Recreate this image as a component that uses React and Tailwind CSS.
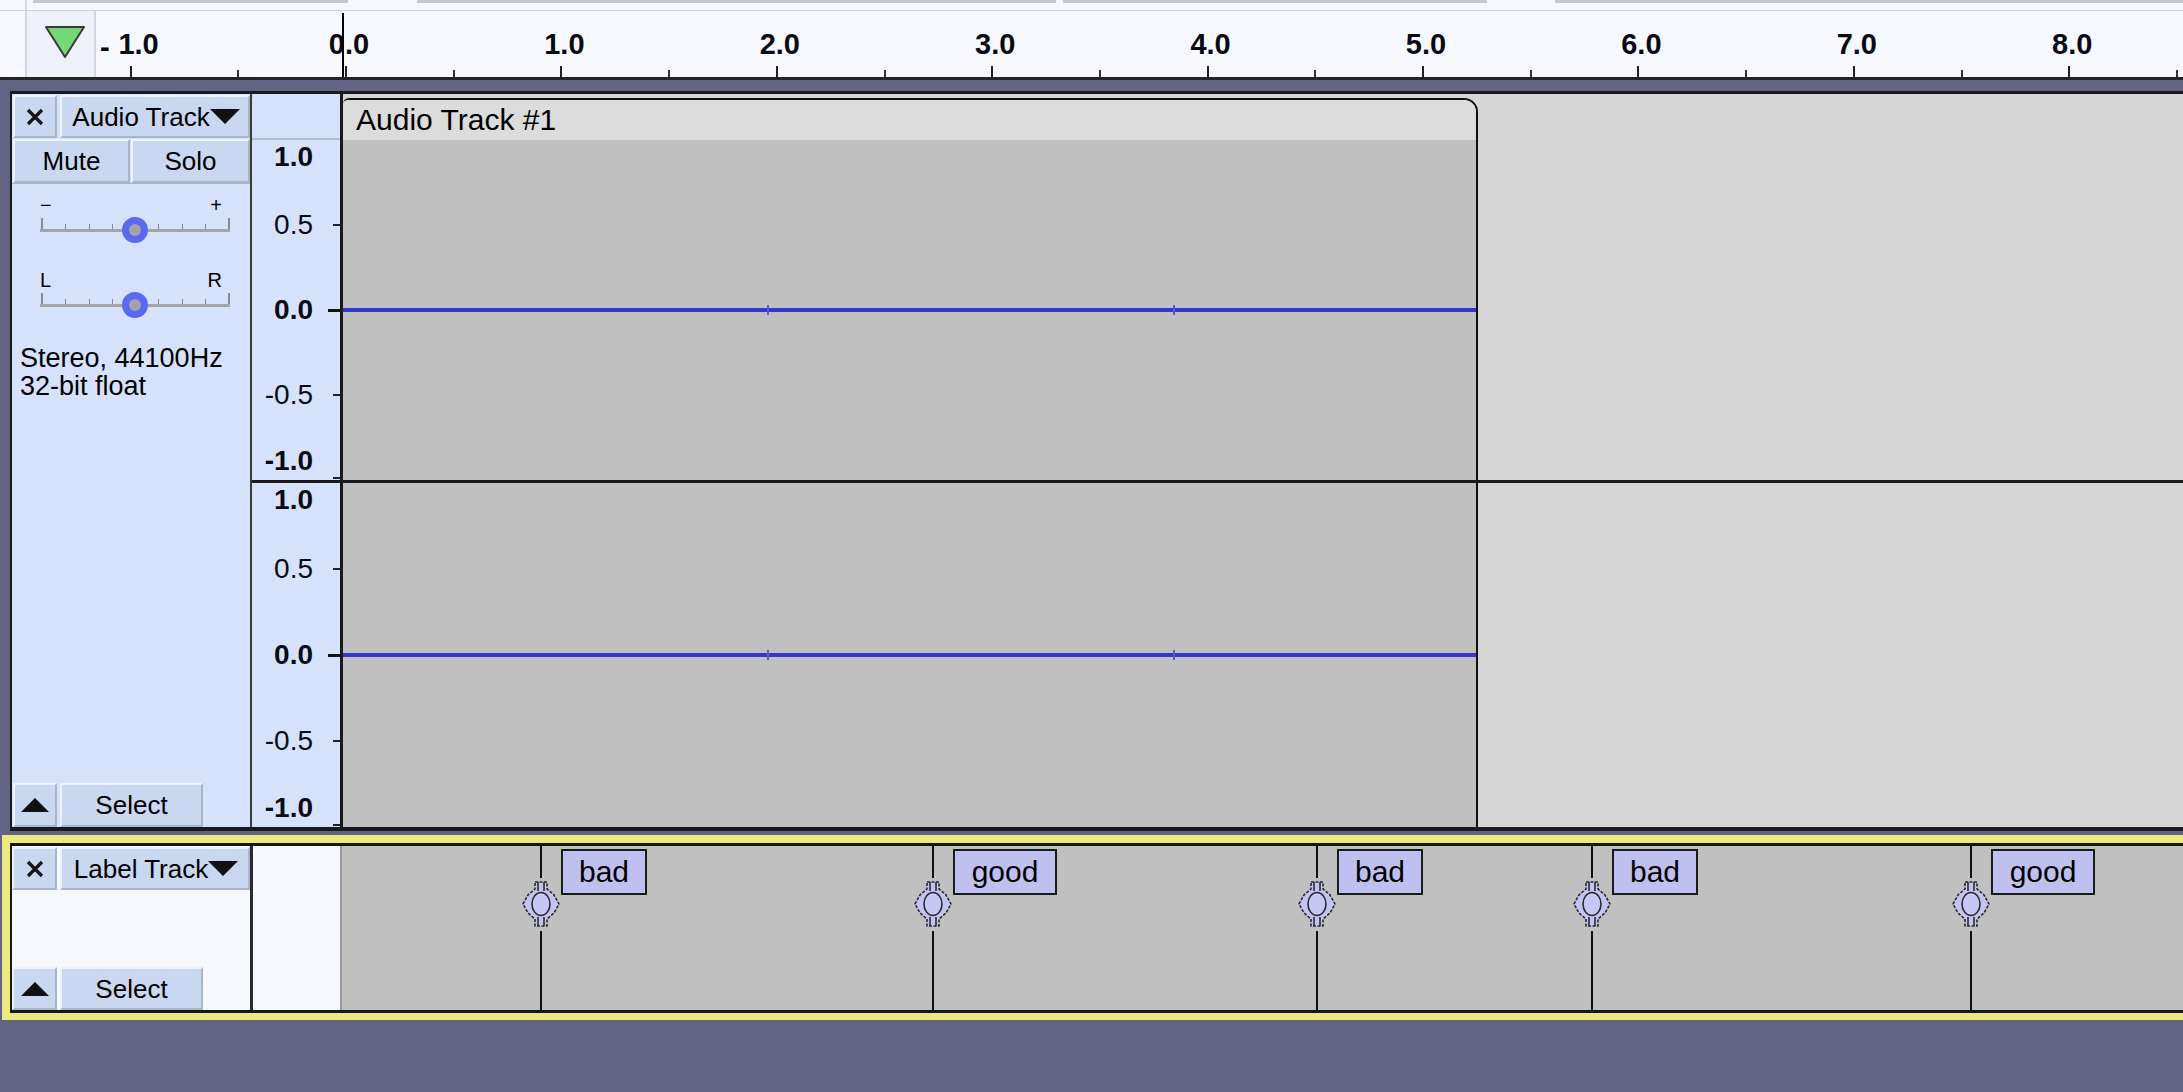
import React from 'react';

const ZERO_X = 346;
const PX_PER_SEC = 215.4;

// time ruler marks every half second, -1.0 .. 8.5
const rulerMarks = Array.from({ length: 20 }, (_, i) => (i - 2) / 2);

const labels = [
    { x: 541, text: 'bad', w: 'w-[86px]' },
    { x: 933, text: 'good', w: 'w-[104px]' },
    { x: 1317, text: 'bad', w: 'w-[86px]' },
    { x: 1592, text: 'bad', w: 'w-[86px]' },
    { x: 1971, text: 'good', w: 'w-[104px]' },
];

const Btn = ({ className = '', children }) => (
    <div
        className={`flex items-center justify-center bg-[#c9d7f1] border-t-2 border-l-2 border-[#eef3fd] border-r-2 border-b-2 border-r-[#a9b5cb] border-b-[#a9b5cb] text-[26px] leading-none text-black ${className}`}
    >
        {children}
    </div>
);

const CloseIcon = () => (
    <svg width="20" height="18" viewBox="0 0 20 18">
        <path d="M3 2 L17 16 M17 2 L3 16" stroke="#111" strokeWidth="3.2" />
    </svg>
);

const DownArrow = () => (
    <svg width="30" height="15" viewBox="0 0 30 15">
        <path d="M0 0 H30 L15 15 Z" fill="#111" />
    </svg>
);

const UpArrow = () => (
    <svg width="28" height="14" viewBox="0 0 28 14">
        <path d="M14 0 L28 14 H0 Z" fill="#111" />
    </svg>
);

function TopStrip() {
    return (
        <div className="flex h-[11px] bg-[#f6f8fd] border-b border-[#cdd0d8]">
            <div className="w-[27px] border-r-2 border-[#d3d6de]" />
            <div className="ml-[6px] w-[315px] h-[3px] bg-[#c6c8ce]" />
            <div className="ml-[69px] w-[639px] h-[3px] bg-[#c6c8ce]" />
            <div className="ml-[7px] w-[424px] h-[3px] bg-[#c6c8ce]" />
            <div className="ml-[68px] flex-1 h-[3px] bg-[#c6c8ce]" />
        </div>
    );
}

function TimeRuler() {
    return (
        <div className="relative flex h-[69px] bg-[#f6f8fd] border-b-[3px] border-[#242424]">
            <div className="w-[27px] border-r-2 border-[#d3d6de]" />
            <div className="w-[69px] bg-[#eef1fa] border-r-2 border-[#d3d6de] pl-[17px] pt-[14px]">
                <svg width="42" height="35" viewBox="0 0 42 35">
                    <path d="M2 2 H40 L21 32 Z" fill="#74d874" stroke="#3a3a3a" strokeWidth="2" strokeLinejoin="round" />
                </svg>
            </div>
            {rulerMarks.map((t) => {
                const x = ZERO_X + PX_PER_SEC * t;
                const major = Number.isInteger(t);
                return (
                    <React.Fragment key={t}>
                        <div
                            className={major ? 'absolute top-[55px] h-[11px] w-[2px] bg-[#222]' : 'absolute top-[59px] h-[7px] w-[2px] bg-[#333]'}
                            style={{ left: x - 1 }}
                        />
                        {major && (
                            <span
                                className="absolute top-[19px] -translate-x-1/2 text-[29px] font-bold leading-[28px] text-[#0a0a14]"
                                style={{ left: t < 0 ? x + 8 : x + 3 }}
                            >
                                {Math.abs(t).toFixed(1)}
                            </span>
                        )}
                    </React.Fragment>
                );
            })}
            <span className="absolute left-[100px] top-[22px] text-[29px] font-bold leading-[28px]">-</span>
            <div className="absolute left-[342px] top-[2px] h-[64px] w-[2px] bg-black" />
        </div>
    );
}

function Slider({ left, right }) {
    const ticks = [13, 7, 7, 7, 7, 7, 7, 7, 13];
    return (
        <div className="ml-[28px] w-[190px]">
            <div className="flex justify-between pr-[8px] h-[23px] text-[20px] leading-[20px] text-black">
                <span>{left}</span>
                <span>{right}</span>
            </div>
            <div className="relative h-[24px]">
                <div className="absolute left-[1px] right-0 top-[1px] h-[12px] flex justify-between items-end">
                    {ticks.map((h, i) => (
                        <div key={i} className={h > 10 ? 'w-[2px] h-[13px] bg-[#8a8a90]' : 'w-[1px] h-[7px] bg-[#8a8a90]'} />
                    ))}
                </div>
                <div className="absolute left-0 right-0 top-[11px] h-[3px] bg-[#a3a3a8]" />
                <div className="absolute left-1/2 top-1/2 -translate-x-1/2 -translate-y-1/2 w-[26px] h-[26px] rounded-full border-[7px] border-[#5a69f2] bg-[#a2a2aa]" />
            </div>
        </div>
    );
}

function TrackPanel() {
    return (
        <div className="w-[238px] flex flex-col bg-[#d6e2fb]">
            <div className="flex gap-[3px] pt-[1px] pl-[1px] h-[45px]">
                <Btn className="w-[44px] h-[43px]">
                    <CloseIcon />
                </Btn>
                <Btn className="flex-1 h-[43px] justify-between pl-[4px] pr-[2px]">
                    <span>Audio Track</span>
                    <DownArrow />
                </Btn>
            </div>
            <div className="flex gap-[1px] pl-[1px] h-[45px] border-b border-[#a9b3c6]">
                <Btn className="w-[117px] h-[44px]">Mute</Btn>
                <Btn className="flex-1 h-[44px]">Solo</Btn>
            </div>
            <div className="mt-[11px]">
                <Slider left="−" right="+" />
            </div>
            <div className="mt-[28px]">
                <Slider left="L" right="R" />
            </div>
            <div className="mt-[27px] px-[8px] text-[27px] leading-[28px] text-black">
                <div>Stereo, 44100Hz</div>
                <div>32-bit float</div>
            </div>
            <div className="mt-auto flex gap-[3px] pl-[1px] h-[44px]">
                <Btn className="w-[44px] h-[44px]">
                    <UpArrow />
                </Btn>
                <Btn className="w-[143px] h-[44px]">Select</Btn>
            </div>
        </div>
    );
}

function VRuler({ className, h }) {
    const vals = [1, 0.5, 0, -0.5, -1];
    return (
        <div className={`relative ${className}`}>
            {vals.map((v) => {
                const y = h / 2 - v * (h / 2);
                const cy = Math.min(Math.max(y, 17), h - 19);
                const bold = v === 1 || v === 0 || v === -1;
                return (
                    <React.Fragment key={v}>
                        <span
                            className={`absolute right-[27px] text-[28px] leading-[28px] text-[#0a0a14] ${bold ? 'font-bold' : 'font-normal'}`}
                            style={{ top: cy - 14 }}
                        >
                            {v.toFixed(1)}
                        </span>
                        {v !== 1 && (
                            <div
                                className={v === 0 ? 'absolute right-0 w-[12px] h-[3px] bg-[#111]' : 'absolute right-0 w-[7px] h-[2px] bg-[#222]'}
                                style={{ top: Math.min(y, h - 2) - 1 }}
                            />
                        )}
                    </React.Fragment>
                );
            })}
        </div>
    );
}

const WaveLine = () => (
    <div className="relative w-full h-[4px] bg-[#3636d4]">
        <div className="absolute left-[424px] -top-[3px] w-[2px] h-[10px] bg-[#5a5ad0]" />
        <div className="absolute left-[830px] -top-[3px] w-[2px] h-[10px] bg-[#5a5ad0]" />
    </div>
);

function AudioTrack() {
    return (
        <div className="ml-[10px] flex h-[740px] border-t-[3px] border-l-2 border-b-4 border-[#1a1a1a]">
            <TrackPanel />
            <div className="w-[2px] bg-[#3a3a3a]" />
            <div className="w-[88px] flex flex-col bg-[#d6e2fb]">
                <div className="h-[46px] border-b-2 border-[#b4bfd4]" />
                <VRuler className="h-[340px]" h={340} />
                <div className="h-[3px] bg-[#1a1a1a]" />
                <VRuler className="h-[344px]" h={344} />
            </div>
            <div className="w-[3px] bg-[#1a1a1a]" />
            <div className="flex-1 flex flex-col bg-[#d6d6d6]">
                <div className="h-[386px] flex">
                    <div className="w-[1135px] pt-[4px] flex flex-col">
                        <div className="flex-1 flex flex-col border-t-2 border-r-2 border-[#111] rounded-tl-[6px] rounded-tr-[14px] overflow-hidden">
                            <div className="h-[40px] shrink-0 flex items-center pl-[13px] bg-[#dcdcdc] text-[30px] leading-none text-black">
                                Audio Track #1
                            </div>
                            <div className="flex-1 flex items-center bg-[#c0c0c0]">
                                <WaveLine />
                            </div>
                        </div>
                    </div>
                    <div className="flex-1" />
                </div>
                <div className="h-[3px] bg-[#1a1a1a]" />
                <div className="flex-1 flex">
                    <div className="w-[1135px] flex items-center bg-[#c0c0c0] border-r-2 border-[#111]">
                        <WaveLine />
                    </div>
                    <div className="flex-1" />
                </div>
            </div>
        </div>
    );
}

const LabelHandle = () => (
    <svg width="38" height="46" viewBox="0 0 38 46">
        <path
            d="M13 1 H25 V8 L32 14 L37 23 L32 32 L25 38 V45 H13 V38 L6 32 L1 23 L6 14 L13 8 Z"
            fill="#c4c4f2"
            stroke="#2a2a2a"
            strokeWidth="1.6"
            strokeDasharray="3 1.5"
        />
        <ellipse cx="19" cy="23" rx="9" ry="11.5" fill="#c8c8f6" stroke="#2a2a2a" strokeWidth="1.6" />
        <path d="M16 1 V10 M22 1 V10 M16 36 V45 M22 36 V45" stroke="#2a2a2a" strokeWidth="1.6" />
    </svg>
);

function LabelTrack() {
    return (
        <div className="ml-[2px] border-t-8 border-l-8 border-b-[7px] border-[#eaea7e]">
            <div className="flex h-[170px] border-t-[3px] border-l-2 border-b-[3px] border-[#161616]">
                <div className="w-[238px] flex flex-col bg-[#f6f8fd]">
                    <div className="flex gap-[3px] pt-[1px] h-[44px]">
                        <Btn className="w-[45px] h-[43px]">
                            <CloseIcon />
                        </Btn>
                        <Btn className="flex-1 h-[43px] justify-between pl-[4px] pr-[2px]">
                            <span>Label Track</span>
                            <DownArrow />
                        </Btn>
                    </div>
                    <div className="mt-auto flex gap-[3px] h-[43px]">
                        <Btn className="w-[45px] h-[43px]">
                            <UpArrow />
                        </Btn>
                        <Btn className="w-[143px] h-[43px]">Select</Btn>
                    </div>
                </div>
                <div className="w-[3px] bg-[#2a2a2a]" />
                <div className="w-[87px] bg-[#f6f8fd]" />
                <div className="w-[2px] bg-[#9a9a9a]" />
                <div className="relative flex-1 bg-[#c0c0c0]">
                    {labels.map((l) => (
                        <div key={l.x} className="absolute top-0 bottom-0 w-[38px]" style={{ left: l.x - 342 - 19 }}>
                            <div className="absolute left-[18px] top-0 h-[32px] w-[2px] bg-[#111]" />
                            <div className="absolute left-0 top-[35px]">
                                <LabelHandle />
                            </div>
                            <div className="absolute left-[18px] top-[85px] bottom-0 w-[2px] bg-[#111]" />
                            <div
                                className={`absolute left-[39px] top-[3px] h-[46px] ${l.w} flex items-center justify-center border-2 border-[#1a1a1a] bg-[#c0c0f0] text-[30px] leading-none text-black`}
                            >
                                {l.text}
                            </div>
                        </div>
                    ))}
                </div>
            </div>
        </div>
    );
}

export default function App() {
    return (
        <div className="w-[2183px] h-[1092px] overflow-hidden bg-[#636483] font-['Liberation_Sans',Arial,sans-serif] text-black">
            <TopStrip />
            <TimeRuler />
            <div className="h-[11px]" />
            <AudioTrack />
            <div className="h-[4px]" />
            <LabelTrack />
        </div>
    );
}
